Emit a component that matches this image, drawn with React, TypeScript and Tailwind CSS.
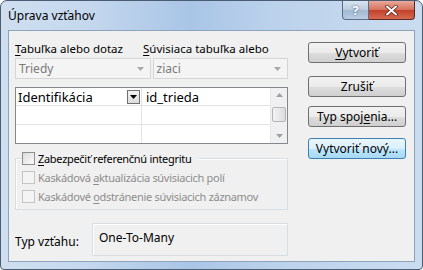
import React from 'react'

function Check({ label, accel, rest, disabled }: { label: string; accel: string; rest: string; disabled?: boolean }) {
  return (
    <div className="flex items-center h-[19px] whitespace-nowrap">
      <div
        className={
          'w-[13px] h-[13px] shrink-0 border ' +
          (disabled
            ? 'border-[#c5c5c5] bg-[#f4f4f4]'
            : 'border-[#8f8f8f] bg-[linear-gradient(135deg,#dcdcdc,#fbfbfb)]')
        }
      />
      <span className={'ml-[3px] text-[11px] tracking-[-0.3px] ' + (disabled ? 'text-[#8d8d8d]' : 'text-black')}>
        {label}
        <span className="underline underline-offset-2">{accel}</span>
        {rest}
      </span>
    </div>
  )
}

function Btn({ children, focus }: { children: React.ReactNode; focus?: boolean }) {
  return (
    <div
      className={
        'w-[98px] h-[21px] rounded-[3px] border flex items-center justify-center whitespace-nowrap ' +
        (focus
          ? 'border-[#3c7fb1] bg-[linear-gradient(#eaf6fd,#d9f0fc_50%,#bee6fd_51%,#a7d9f5)]'
          : 'border-[#707070] bg-[linear-gradient(#f2f2f2,#ebebeb_50%,#dddddd_51%,#cfcfcf)]')
      }
    >
      {children}
    </div>
  )
}

function Combo({ text }: { text: string }) {
  return (
    <div className="flex-1 h-[21px] border border-[#d5d5d5] bg-[#f4f4f4] flex items-center justify-between pl-[3px] pr-[6px] text-[#7a7a7a]">
      <span>{text}</span>
      <svg width="7" height="4" viewBox="0 0 7 4">
        <path d="M0 0h7L3.5 4z" fill="#a8a8a8" />
      </svg>
    </div>
  )
}

export default function App() {
  return (
    <div className="w-[423px] h-[270px] flex flex-col rounded-t-[7px] rounded-b-[4px] border border-[#4a5d73] bg-[linear-gradient(90deg,#cfdff0,#c5d8ee_20%,#a9c5e6_45%,#bcd2ec_65%,#cadcef)] px-[7px] pb-[7px] font-['Noto_Sans',sans-serif] text-[12px] leading-[14px] text-black overflow-hidden">
      {/* Title bar */}
      <div className="h-[29px] flex items-start justify-between">
        <div className="pt-[8px] text-[12px] text-black">Úprava vzťahov</div>
        <div className="flex">
          <div className="w-[27px] h-[19px] border border-[#5b6d83] border-t-0 rounded-bl-[4px] bg-[linear-gradient(#d9e4f1,#b9cbe0_50%,#a3b8d1_51%,#b9cde3)] flex items-center justify-center text-white font-bold text-[13px] [text-shadow:0_0_2px_#33475e]">
            ?
          </div>
          <div className="w-[46px] h-[19px] border border-[#5b2a22] border-t-0 border-l-0 rounded-br-[4px] bg-[linear-gradient(#e9a99b,#d4705b_50%,#c2412b_51%,#d66a50)] flex items-center justify-center">
            <svg width="13" height="11" viewBox="0 0 13 11">
              <path d="M2 1.5l9 8M11 1.5l-9 8" stroke="#5a1c12" strokeWidth="3.4" strokeLinecap="round" />
              <path d="M2 1.5l9 8M11 1.5l-9 8" stroke="#ffffff" strokeWidth="2" strokeLinecap="round" />
            </svg>
          </div>
        </div>
      </div>

      {/* Client area */}
      <div className="flex-1 border border-[#8ea2bb] bg-[#f0f0f0] flex pl-[6px] pr-[7px]">
        {/* Left column */}
        <div className="w-[273px] flex flex-col">
          <div className="flex mt-[11px] h-[14px] whitespace-nowrap text-[11.5px]">
            <div className="w-[128px]">
              <span className="underline underline-offset-2">T</span>abuľka alebo dotaz
            </div>
            <div>
              <span className="underline underline-offset-2">S</span>úvisiaca tabuľka alebo
            </div>
          </div>
          <div className="flex gap-[2px] mt-[2px]">
            <Combo text="Triedy" />
            <Combo text="ziaci" />
          </div>

          {/* Field grid */}
          <div className="mt-[8px] h-[57px] border border-[#828790] bg-white flex text-[13px]">
            <div className="flex-1 flex flex-col">
              <div className="h-[18px] flex border-b border-[#e3e3e3]">
                <div className="w-[126px] flex items-center justify-between pl-[2px] pr-[1px] border-r border-[#e3e3e3]">
                  <span>Identifikácia</span>
                  <div className="w-[13px] h-[14px] border border-[#707070] bg-[linear-gradient(#f2f2f2,#dcdcdc)] flex items-center justify-center">
                    <svg width="7" height="4" viewBox="0 0 7 4">
                      <path d="M0 0h7L3.5 4z" fill="#000" />
                    </svg>
                  </div>
                </div>
                <div className="flex-1 flex items-center pl-[4px]">id_trieda</div>
              </div>
              <div className="h-[19px] flex border-b border-[#e3e3e3]">
                <div className="w-[126px] border-r border-[#e3e3e3]" />
              </div>
              <div className="flex-1 flex">
                <div className="w-[126px] border-r border-[#e3e3e3]" />
              </div>
            </div>
            {/* Scrollbar */}
            <div className="w-[17px] bg-[#f0f0f0] border-l border-[#e8e8e8] flex flex-col items-center justify-between py-[5px]">
              <svg width="7" height="4" viewBox="0 0 7 4">
                <path d="M0 4h7L3.5 0z" fill="#a0a0a0" />
              </svg>
              <div className="w-[14px] h-[15px] rounded-[2px] border border-[#b5b5b5] bg-[linear-gradient(90deg,#f3f3f3,#dcdcdc)] -mt-[3px]" />
              <svg width="7" height="4" viewBox="0 0 7 4">
                <path d="M0 0h7L3.5 4z" fill="#a0a0a0" />
              </svg>
            </div>
          </div>

          {/* Referential integrity group */}
          <div className="mt-[14px] h-[52px] border border-[#d5dfe5] shadow-[inset_1px_1px_0_#ffffff] flex flex-col pl-[6px]">
            <div className="-mt-[10px] bg-[#f0f0f0] self-start pr-[8px]">
              <Check label="" accel="Z" rest="abezpečiť referenčnú integritu" />
            </div>
            <Check label="Kaskádová " accel="a" rest="ktualizácia súvisiacich polí" disabled />
            <Check label="Kaskádové " accel="o" rest="dstránenie súvisiacich záznamov" disabled />
          </div>

          {/* Relationship type */}
          <div className="mt-[13px] flex items-center">
            <div className="w-[77px] pt-[4px]">Typ vzťahu:</div>
            <div className="flex-1 h-[33px] border border-[#d5dfe5] shadow-[inset_1px_1px_0_#ffffff] pl-[6px] pt-[7px]">
              One-To-Many
            </div>
          </div>
        </div>

        {/* Buttons */}
        <div className="ml-[20px] flex flex-col pt-[11px]">
          <Btn>
            <span className="underline underline-offset-2">V</span>ytvoriť
          </Btn>
          <div className="mt-[13px]">
            <Btn>Zrušiť</Btn>
          </div>
          <div className="mt-[9px]">
            <Btn>
              Typ spoj<span className="underline underline-offset-2">e</span>nia...
            </Btn>
          </div>
          <div className="mt-[11px]">
            <Btn focus>Vytvoriť nový...</Btn>
          </div>
        </div>
      </div>
    </div>
  )
}
